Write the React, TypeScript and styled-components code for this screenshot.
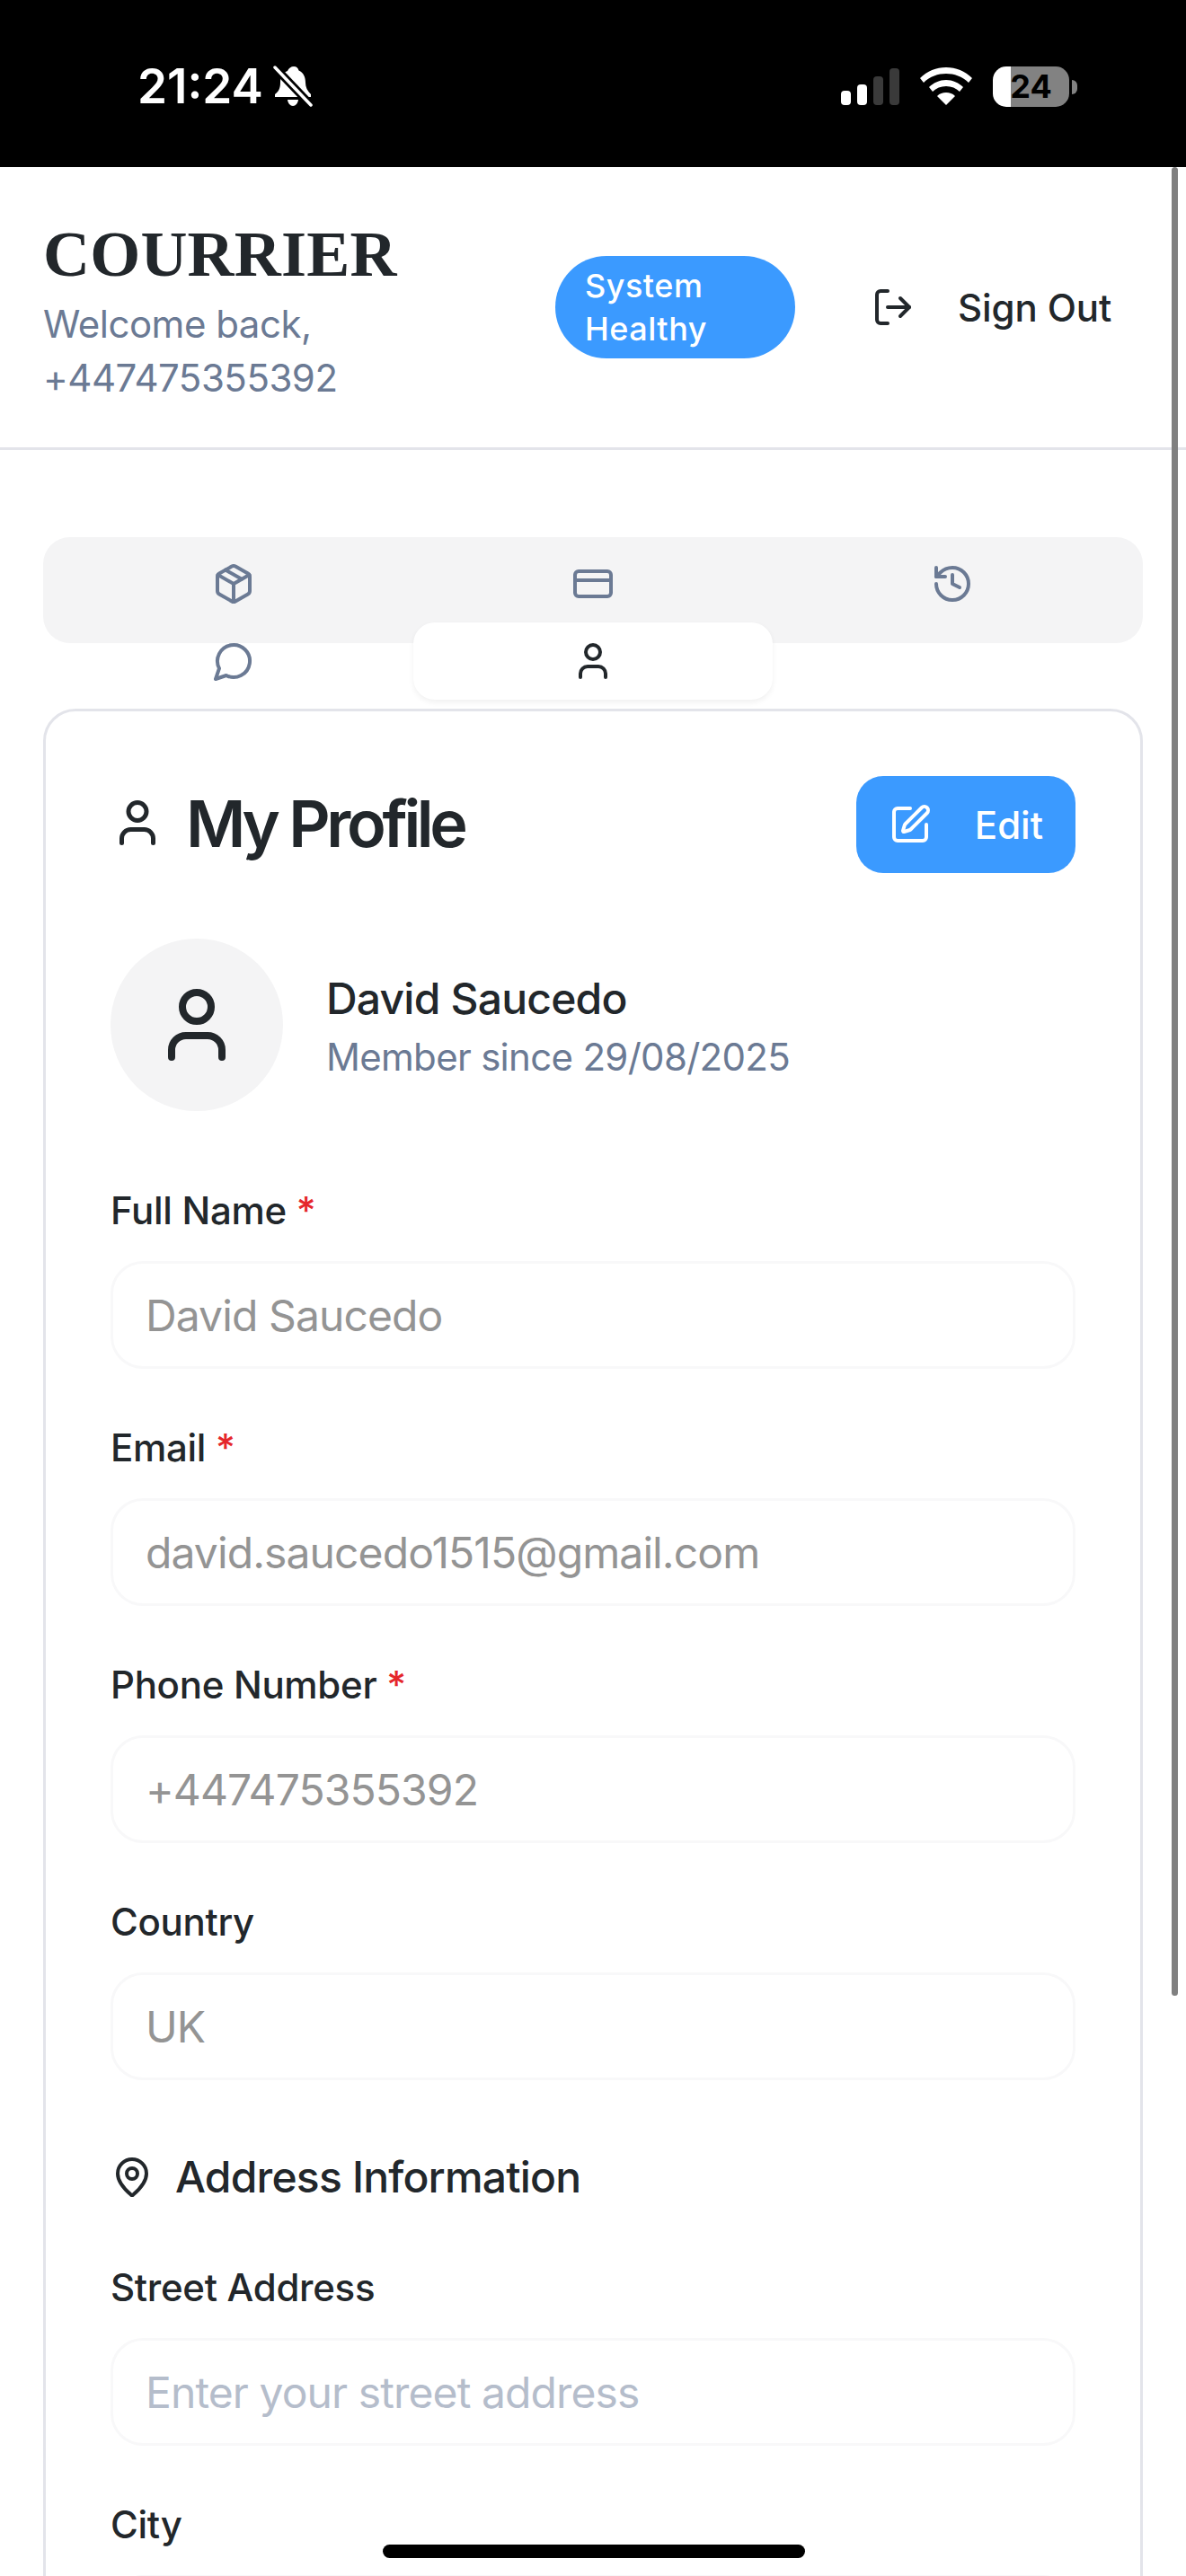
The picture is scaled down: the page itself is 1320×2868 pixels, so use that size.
import React from "react";
import styled, { createGlobalStyle } from "styled-components";
import {
  Package,
  CreditCard,
  History,
  User,
  SquarePen,
  LogOut,
  MapPin,
} from "lucide-react";

const Colors = {
  Ink: "#22272b",
  Slate: "#6b7a94",
  Blue: "#3b9aff",
  Line: "#e3e4ea",
  Soft: "#f4f4f5",
  Faint: "#f8f8f9",
  Filled: "#949494",
  Hint: "#b5bdcb",
  Red: "#e5262b",
};

const GlobalStyle = createGlobalStyle`
  * { box-sizing: border-box; }
  html, body { margin: 0; padding: 0; background: #fff; }
  body { font-family: Inter, "Liberation Sans", sans-serif; color: ${Colors.Ink}; }
`;

const Phone = styled.div`
  position: relative;
  width: 1320px;
  height: 2868px;
  overflow: hidden;
  background: #fff;
`;

const StatusBar = styled.div`
  display: flex;
  align-items: center;
  height: 186px;
  padding: 11px 130px 5px 153px;
  background: #000;
  color: #fff;
`;

const Clock = styled.span`
  font-size: 53px;
  font-weight: 600;
  letter-spacing: 0;
`;

const BellIcon = styled.svg`
  width: 44px;
  height: 46px;
  margin-left: 11px;
`;

const StatusRight = styled.div`
  display: flex;
  align-items: center;
  gap: 23px;
  margin-left: auto;
`;

const Battery = styled.div`
  position: relative;
  display: flex;
  align-items: center;
  justify-content: center;
  width: 85px;
  height: 45px;
  border-radius: 15px;
  background: linear-gradient(90deg, #fff 24%, #828282 24%);
  color: #000;
  font-size: 36px;
  font-weight: 700;
  &::after {
    content: "";
    position: absolute;
    right: -9px;
    top: 15px;
    width: 6px;
    height: 16px;
    border-radius: 0 6px 6px 0;
    background: #828282;
  }
`;

const Header = styled.header`
  display: flex;
  align-items: center;
  height: 315px;
  padding: 0 48px;
  border-bottom: 3px solid ${Colors.Line};
`;

const Brand = styled.div`
  width: 570px;
  padding-top: 7px;
`;

const Title = styled.h1`
  margin: 0 0 6px;
  font-family: "Liberation Serif", serif;
  font-size: 72px;
  font-weight: 700;
  line-height: 84px;
  letter-spacing: 0.2px;
`;

const Subtitle = styled.p`
  margin: 0;
  font-size: 42px;
  line-height: 60px;
  letter-spacing: -0.5px;
  color: ${Colors.Slate};
`;

const StatusBadge = styled.div`
  width: 267px;
  padding: 9px 33px;
  border-radius: 57px;
  background: ${Colors.Blue};
  color: #fff;
  font-size: 36px;
  font-weight: 500;
  line-height: 48px;
  letter-spacing: 0.5px;
`;

const SignOut = styled.button`
  display: flex;
  align-items: center;
  gap: 48px;
  margin-left: 85px;
  padding: 0;
  border: 0;
  background: none;
  color: ${Colors.Ink};
  font: 500 42px Inter, sans-serif;
  letter-spacing: -0.1px;
`;

const Main = styled.main`
  padding: 97px 48px 0;
`;

const TabList = styled.div`
  display: grid;
  grid-template-columns: repeat(3, 1fr);
  grid-auto-rows: 86px;
  height: 118px;
  padding: 9px 12px;
  border-radius: 30px;
  background: ${Colors.Soft};
`;

const Tab = styled.div<{ $active?: boolean }>`
  display: flex;
  align-items: center;
  justify-content: center;
  border-radius: 24px;
  color: ${(p) => (p.$active ? Colors.Ink : Colors.Slate)};
  background: ${(p) => (p.$active ? "#fff" : "transparent")};
  box-shadow: ${(p) => (p.$active ? "0 3px 6px rgba(0, 0, 0, 0.06)" : "none")};
`;

const Card = styled.section`
  margin-top: 73px;
  padding: 72px;
  border: 3px solid ${Colors.Line};
  border-radius: 36px;
`;

const CardHead = styled.div`
  display: flex;
  align-items: center;
  justify-content: space-between;
  height: 108px;
`;

const CardTitle = styled.h2`
  display: flex;
  align-items: center;
  gap: 24px;
  margin: 0;
  padding-bottom: 4px;
  font-size: 72px;
  font-weight: 600;
  letter-spacing: -4.4px;
`;

const EditButton = styled.button`
  display: flex;
  align-items: center;
  gap: 48px;
  height: 108px;
  padding: 0 36px;
  border: 0;
  border-radius: 30px;
  background: ${Colors.Blue};
  color: #fff;
  font: 500 42px Inter, sans-serif;
`;

const ProfileRow = styled.div`
  display: flex;
  align-items: center;
  gap: 48px;
  margin: 73px 0 75px;
`;

const Avatar = styled.div`
  display: flex;
  align-items: center;
  justify-content: center;
  width: 192px;
  height: 192px;
  border-radius: 50%;
  background: ${Colors.Soft};
`;

const ProfileText = styled.div`
  padding-top: 4px;
`;

const ProfileName = styled.div`
  font-size: 48px;
  font-weight: 500;
  line-height: 66px;
  letter-spacing: -0.8px;
`;

const ProfileSince = styled.div`
  margin-top: 2px;
  font-size: 42px;
  line-height: 60px;
  letter-spacing: -0.7px;
  color: ${Colors.Slate};
`;

const Field = styled.div`
  margin-top: 52px;
`;

const FieldLabel = styled.label`
  display: block;
  margin-bottom: 20px;
  font-size: 42px;
  font-weight: 500;
  line-height: 72px;
  letter-spacing: -0.3px;
`;

const Required = styled.span`
  color: ${Colors.Red};
`;

const FieldInput = styled.input`
  display: block;
  width: 100%;
  height: 120px;
  padding: 0 36px;
  border: 3px solid ${Colors.Faint};
  border-radius: 36px;
  outline: none;
  background: #fff;
  color: ${Colors.Filled};
  font: 400 48px Inter, sans-serif;
  letter-spacing: -0.9px;
  &::placeholder {
    color: ${Colors.Hint};
    opacity: 1;
  }
`;

const SectionHead = styled.h3`
  display: flex;
  align-items: center;
  gap: 24px;
  margin: 78px 0 58px;
  font-size: 48px;
  font-weight: 500;
  letter-spacing: -0.8px;
`;

const ScrollThumb = styled.div`
  position: absolute;
  top: 186px;
  right: 9px;
  width: 7px;
  height: 2036px;
  border-radius: 4px;
  background: #808080;
`;

const HomeBar = styled.div`
  position: absolute;
  left: 426px;
  bottom: 20px;
  width: 470px;
  height: 15px;
  border-radius: 8px;
  background: #000;
`;

const fields = [
  { label: "Full Name", value: "David Saucedo", required: true },
  { label: "Email", value: "david.saucedo1515@gmail.com", required: true },
  { label: "Phone Number", value: "+447475355392", required: true },
  { label: "Country", value: "UK", required: false },
];

const FormField: React.FC<{
  label: string;
  value?: string;
  placeholder?: string;
  required?: boolean;
}> = ({ label, value, placeholder, required }) => (
  <Field>
    <FieldLabel>
      {label}
      {required && <Required> *</Required>}
    </FieldLabel>
    <FieldInput readOnly value={value ?? ""} placeholder={placeholder} />
  </Field>
);

// the bubble in lucide 0.562 has another tail, so it is drawn here
const ChatBubble = () => (
  <svg
    width="48"
    height="48"
    viewBox="0 0 24 24"
    fill="none"
    stroke="currentColor"
    strokeWidth="2"
    strokeLinecap="round"
    strokeLinejoin="round"
  >
    <path d="M7.900 20A9 9 0 1 0 4 16.100L2 22Z" />
  </svg>
);

export default function App() {
  return (
    <Phone>
      <GlobalStyle />
      <StatusBar>
        <Clock>21:24</Clock>
        <BellIcon viewBox="0 0 44 46">
          <path
            d="M23 1c3 0 5 2 5.500 4.500C34 8 36 13 36 19c0 5 2 9 6 13v3H2v-3c4-3 6-7 6-13 0-6 2-10.500 8-13C17 3 20 1 23 1z"
            fill="#fff"
          />
          <path d="M16 38h12c-.5 4-3 7-6 7s-5.500-3-6-7z" fill="#fff" />
          <path d="M2 2l40 42" stroke="#000" strokeWidth="9" />
          <path d="M2 2l40 42" stroke="#fff" strokeWidth="3.500" strokeLinecap="round" />
        </BellIcon>
        <StatusRight>
          <svg width="65" height="41" viewBox="0 0 65 41">
            <rect x="0" y="25" width="11" height="16" rx="4" fill="#fff" />
            <rect x="18" y="18" width="11" height="23" rx="4" fill="#fff" />
            <rect x="36" y="9" width="11" height="32" rx="4" fill="#3a3a3a" />
            <rect x="54" y="0" width="11" height="41" rx="4" fill="#3a3a3a" />
          </svg>
          <svg width="58" height="42" viewBox="0 0 58 42" fill="#fff">
            <path d="M29 0c11 0 21 4 29 12l-4 5C47 10 38 7 29 7S11 10 4 17l-4-5C8 4 18 0 29 0z" />
            <path d="M29 14c7 0 14 3 19 8l-4 5c-4-4-9-6-15-6s-11 2-15 6l-4-5c5-5 12-8 19-8z" />
            <path d="M29 28c4 0 7 1 10 4L29 42 19 32c3-3 6-4 10-4z" />
          </svg>
          <Battery>24</Battery>
        </StatusRight>
      </StatusBar>

      <Header>
        <Brand>
          <Title>COURRIER</Title>
          <Subtitle>
            Welcome back,
            <br />
            +447475355392
          </Subtitle>
        </Brand>
        <StatusBadge>System Healthy</StatusBadge>
        <SignOut>
          <LogOut size={48} strokeWidth={2} />
          Sign Out
        </SignOut>
      </Header>

      <Main>
        <TabList>
          <Tab><Package size={48} /></Tab>
          <Tab><CreditCard size={48} /></Tab>
          <Tab><History size={48} /></Tab>
          <Tab><ChatBubble /></Tab>
          <Tab $active><User size={48} /></Tab>
        </TabList>

        <Card>
          <CardHead>
            <CardTitle>
              <User size={60} />
              My Profile
            </CardTitle>
            <EditButton>
              <SquarePen size={48} />
              Edit
            </EditButton>
          </CardHead>

          <ProfileRow>
            <Avatar>
              <User size={96} />
            </Avatar>
            <ProfileText>
              <ProfileName>David Saucedo</ProfileName>
              <ProfileSince>Member since 29/08/2025</ProfileSince>
            </ProfileText>
          </ProfileRow>

          {fields.map((f) => (
            <FormField key={f.label} {...f} />
          ))}

          <SectionHead>
            <MapPin size={48} />
            Address Information
          </SectionHead>
          <FormField label="Street Address" placeholder="Enter your street address" />
          <FormField label="City" placeholder="Enter your city" />
        </Card>
      </Main>

      <ScrollThumb />
      <HomeBar />
    </Phone>
  );
}
